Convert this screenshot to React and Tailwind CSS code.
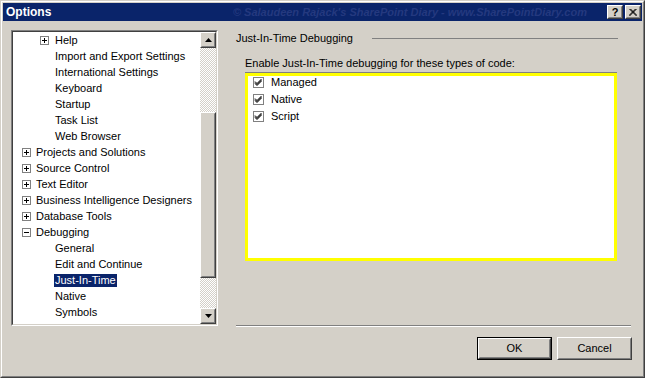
import React from 'react';

// Arborescence affichée dans le panneau gauche
const treeItems = [
  { level: 2, label: 'Help', expander: 'plus' },
  { level: 2, label: 'Import and Export Settings' },
  { level: 2, label: 'International Settings' },
  { level: 2, label: 'Keyboard' },
  { level: 2, label: 'Startup' },
  { level: 2, label: 'Task List' },
  { level: 2, label: 'Web Browser' },
  { level: 1, label: 'Projects and Solutions', expander: 'plus' },
  { level: 1, label: 'Source Control', expander: 'plus' },
  { level: 1, label: 'Text Editor', expander: 'plus' },
  { level: 1, label: 'Business Intelligence Designers', expander: 'plus' },
  { level: 1, label: 'Database Tools', expander: 'plus' },
  { level: 1, label: 'Debugging', expander: 'minus' },
  { level: 2, label: 'General' },
  { level: 2, label: 'Edit and Continue' },
  { level: 2, label: 'Just-In-Time', selected: true },
  { level: 2, label: 'Native' },
  { level: 2, label: 'Symbols' },
];

const codeTypes = ['Managed', 'Native', 'Script'];

const Expander = ({ type }) => (
  <svg width="9" height="9" viewBox="0 0 9 9" className="block">
    <rect x="0.5" y="0.5" width="8" height="8" fill="#fff" stroke="#808080" />
    <line x1="2" y1="4.5" x2="7" y2="4.5" stroke="#000" />
    {type === 'plus' && <line x1="4.5" y1="2" x2="4.5" y2="7" stroke="#000" />}
  </svg>
);

// Bouton en relief style Windows 2000
const Raised = ({ className = '', children }) => (
  <div className={`border border-t-white border-l-white border-r-[#404040] border-b-[#404040] bg-[#d4d0c8] ${className}`}>
    <div className="w-full h-full border border-t-[#d4d0c8] border-l-[#d4d0c8] border-r-[#808080] border-b-[#808080] flex items-center justify-center">
      {children}
    </div>
  </div>
);

const Arrow = ({ up }) => (
  <svg width="7" height="4" viewBox="0 0 7 4" className="block">
    {up ? <polygon points="3.5,0 7,4 0,4" fill="#000" /> : <polygon points="0,0 7,0 3.5,4" fill="#000" />}
  </svg>
);

const CheckBox = () => (
  <div className="w-[11px] h-[11px] border border-[#808080] bg-white flex items-center justify-center">
    <svg width="9" height="9" viewBox="0 0 9 9" className="block">
      <path d="M1 3.5 L3 5.5 L7.5 1 M1 4.5 L3 6.5 L7.5 2 M1 5.5 L3 7.5 L7.5 3" stroke="#000" strokeWidth="1" fill="none" />
    </svg>
  </div>
);

export default function App() {
  return (
    <div className="w-[646px] h-[380px] bg-white font-['Liberation_Sans',Arial,sans-serif] text-[11px] text-black">
      {/* Cadre de la fenêtre */}
      <div className="w-[645px] h-[378px] border border-t-[#d4d0c8] border-l-[#d4d0c8] border-r-[#404040] border-b-[#404040]">
        <div className="w-full h-full border border-t-white border-l-white border-r-[#808080] border-b-[#808080] bg-[#d4d0c8] p-px flex flex-col">
          {/* Barre de titre */}
          <div className="h-[18px] bg-[#0a246a] flex items-center pl-[3px] pr-[1px]">
            <span className="text-white font-bold text-[12px] leading-none">Options</span>
            <span className="ml-auto mr-[20px] italic font-bold text-[11px] text-[#24397f] leading-none">
              © Salaudeen Rajack's SharePoint Diary - www.SharePointDiary.com
            </span>
            <Raised className="w-[16px] h-[14px]">
              <span className="font-bold text-[11px] leading-none">?</span>
            </Raised>
            <Raised className="w-[16px] h-[14px] ml-[2px]">
              <svg width="8" height="7" viewBox="0 0 8 7" className="block">
                <path d="M0.5 0 L7.5 7 M1.5 0 L8 6.5 M7.5 0 L0.5 7 M6.5 0 L0 6.5" stroke="#000" strokeWidth="1" />
              </svg>
            </Raised>
          </div>

          {/* Corps du dialogue */}
          <div className="flex pl-[8px] pt-[9px]">
            {/* Arborescence */}
            <div className="w-[207px] h-[296px] border border-t-[#808080] border-l-[#808080] border-r-white border-b-white">
              <div className="w-full h-full border border-t-[#404040] border-l-[#404040] border-r-[#d4d0c8] border-b-[#d4d0c8] bg-white flex">
                <div className="flex-1 flex flex-col">
                  {treeItems.map((item) => (
                    <div
                      key={item.label}
                      className={`h-[16px] flex items-center shrink-0 ${item.level === 1 ? 'pl-[9px]' : 'pl-[27px]'}`}
                    >
                      <div className="w-[9px] shrink-0">{item.expander && <Expander type={item.expander} />}</div>
                      <span
                        className={`${item.level === 1 ? 'ml-[4px]' : 'ml-[5px]'} px-px leading-[13px] whitespace-nowrap ${item.selected ? 'bg-[#0a246a] text-white' : ''}`}
                      >
                        {item.label}
                      </span>
                    </div>
                  ))}
                </div>
                {/* Barre de défilement */}
                <div className="w-[16px] flex flex-col">
                  <Raised className="w-[16px] h-[16px] shrink-0">
                    <Arrow up />
                  </Raised>
                  <div className="flex-1 flex flex-col bg-[repeating-conic-gradient(#d4d0c8_0%_25%,#ffffff_0%_50%)] bg-[length:2px_2px]">
                    <div className="h-[64px]" />
                    <Raised className="w-[16px] h-[166px]" />
                  </div>
                  <Raised className="w-[16px] h-[16px] shrink-0">
                    <Arrow />
                  </Raised>
                </div>
              </div>
            </div>

            {/* Panneau de droite */}
            <div className="ml-[18px] w-[396px] flex flex-col">
              <div className="h-[16px] flex items-center">
                <span className="whitespace-nowrap">Just-In-Time Debugging</span>
                <div className="flex-1 ml-[19px] mr-[14px] h-px bg-[#808080]" />
              </div>
              <div className="mt-[9px] h-[16px] flex items-center pl-[9px]">
                Enable Just-In-Time debugging for these types of code:
              </div>
              <div className="relative mt-px ml-[9px] w-[372px] h-[189px] bg-white border-t border-[#808080] pt-[1px]">
                {codeTypes.map((t) => (
                  <div key={t} className="h-[17px] flex items-center pl-[8px]">
                    <CheckBox />
                    <span className="ml-[7px]">{t}</span>
                  </div>
                ))}
                {/* Cadre jaune de mise en évidence */}
                <div className="absolute left-0 right-0 top-0 bottom-0 border-[3px] border-[#ffff00]" />
              </div>
              <div className="mt-[64px] w-[395px]">
                <div className="h-px bg-[#808080]" />
                <div className="h-px bg-white" />
              </div>
              <div className="mt-[10px] flex justify-end gap-[5px]">
                <div className="border border-black">
                  <Raised className="w-[73px] h-[21px]">OK</Raised>
                </div>
                <Raised className="w-[75px] h-[23px]">Cancel</Raised>
              </div>
            </div>
          </div>
        </div>
      </div>
    </div>
  );
}
